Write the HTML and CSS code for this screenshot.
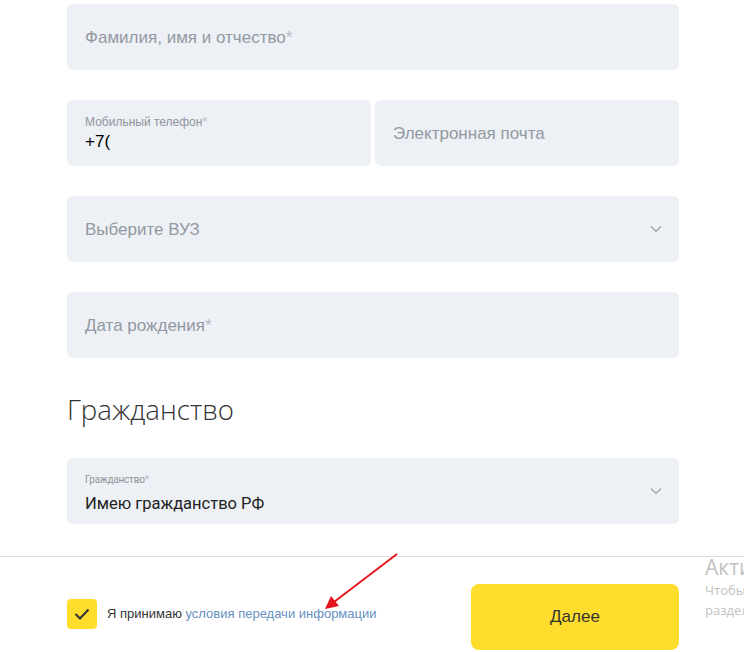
FILE: index.html
```html
<!DOCTYPE html>
<html lang="ru">
<head>
<meta charset="utf-8">
<title>Анкета</title>
<link rel="stylesheet" href="styles.css">
</head>
<body>
<main class="form">
  <div class="field"><span class="placeholder">Фамилия, имя и отчество<span class="req">*</span></span></div>
  <div class="row">
    <div class="field field-filled">
      <span class="label">Мобильный телефон<span class="req">*</span></span>
      <span class="value">+7(</span>
    </div>
    <div class="field"><span class="placeholder">Электронная почта</span></div>
  </div>
  <div class="field field-select">
    <span class="placeholder">Выберите ВУЗ</span>
    <svg class="chevron" width="12" height="8" viewBox="0 0 12 8"><path d="M1 1.5 L6 6.5 L11 1.5" fill="none" stroke="#9aa0a8" stroke-width="1.2"/></svg>
  </div>
  <div class="field"><span class="placeholder">Дата рождения<span class="req">*</span></span></div>
  <h2 class="heading">Гражданство</h2>
  <div class="field field-select field-filled">
    <div class="stack">
      <span class="label label-cond">Гражданство<span class="req">*</span></span>
      <span class="value value-dark">Имею гражданство РФ</span>
    </div>
    <svg class="chevron" width="12" height="8" viewBox="0 0 12 8"><path d="M1 1.5 L6 6.5 L11 1.5" fill="none" stroke="#9aa0a8" stroke-width="1.2"/></svg>
  </div>
</main>
<footer class="bottom">
  <div class="bottom-inner">
    <label class="agree">
      <span class="checkbox"><svg width="16" height="12" viewBox="0 0 16 12"><path d="M1.5 6 L6 10.5 L14.5 1.5" fill="none" stroke="#333" stroke-width="2"/></svg></span>
      <span class="agree-text">Я принимаю <a class="link">условия передачи информации</a></span>
    </label>
    <button class="next">Далее</button>
  </div>
  <div class="watermark">
    <div class="wm-title">Активация Windows</div>
    <div class="wm-text">Чтобы активировать Windows, перейдите в</div>
    <div class="wm-text">раздел "Параметры".</div>
  </div>
  <svg class="arrow" width="80" height="70" viewBox="0 0 80 70">
    <line x1="75" y1="2" x2="12" y2="50" stroke="#e8141b" stroke-width="2"/>
    <path d="M3 57 L9 44 L17 54 Z" fill="#e8141b"/>
  </svg>
</footer>
</body>
</html>
```
FILE: styles.css
```css
* { box-sizing: border-box; }
html, body { margin: 0; padding: 0; background: #fff; }
body {
  width: 744px;
  height: 652px;
  overflow: hidden;
  font-family: "Liberation Sans", Arial, sans-serif;
  color: #333;
}
.form {
  width: 612px;
  margin-left: 67px;
  padding-top: 4px;
  display: flex;
  flex-direction: column;
  gap: 30px;
}
.row {
  display: flex;
  gap: 4px;
}
.row .field { flex: 1; }
.field {
  height: 66px;
  background: #edf0f5;
  border-radius: 6px;
  padding: 0 18px;
  display: flex;
  flex-direction: column;
  justify-content: center;
}
.placeholder {
  font-size: 17px;
  color: #9299a2;
  margin-top: 1px;
}
.req { color: #b4b9c0; }
.label {
  font-size: 12px;
  color: #8f959c;
  line-height: 14px;
}
.value {
  font-size: 17px;
  color: #000;
  line-height: 20px;
  margin-top: 3px;
}
.field-select {
  flex-direction: row;
  align-items: center;
  justify-content: space-between;
  padding-right: 17px;
}
.stack { display: flex; flex-direction: column; }
.label-cond {
  font-family: "Roboto", sans-serif;
  font-size: 11px;
  letter-spacing: -0.3px;
  transform: scaleX(0.92);
  transform-origin: left;
  margin-top: 4px;
}
.value-dark {
  font-family: "Roboto", sans-serif;
  color: #222;
  font-size: 16.5px;
  margin-top: 7px;
}
.heading {
  margin: 2px 0 0;
  font-family: "Open Sans", sans-serif;
  font-weight: 300;
  font-size: 27.6px;
  line-height: 38px;
  color: #333;
}
.bottom {
  position: relative;
  margin-top: 32px;
  border-top: 1px solid #dedede;
  height: 100px;
}
.bottom-inner {
  width: 612px;
  margin-left: 67px;
  padding-top: 27px;
  display: flex;
  justify-content: space-between;
  align-items: center;
}
.agree {
  display: flex;
  align-items: center;
  gap: 10px;
  margin-top: -7px;
}
.checkbox {
  width: 30px;
  height: 30px;
  border-radius: 4px;
  background: #ffdd2d;
  display: flex;
  align-items: center;
  justify-content: center;
}
.agree-text {
  font-size: 13px;
  color: #333;
}
.link { color: #6890bf; text-decoration: none; }
.next {
  width: 208px;
  height: 66px;
  border: none;
  border-radius: 8px;
  background: #ffdd2d;
  font-family: "Liberation Sans", Arial, sans-serif;
  font-size: 17px;
  color: #333;
}
.watermark {
  position: absolute;
  left: 705px;
  top: -2px;
  white-space: nowrap;
  font-family: "Open Sans", sans-serif;
  color: #c2c2c2;
}
.wm-title { font-size: 21px; line-height: 25px; }
.wm-text { font-size: 13px; line-height: 20px; }
.arrow {
  position: absolute;
  left: 322px;
  top: -5px;
}
```
